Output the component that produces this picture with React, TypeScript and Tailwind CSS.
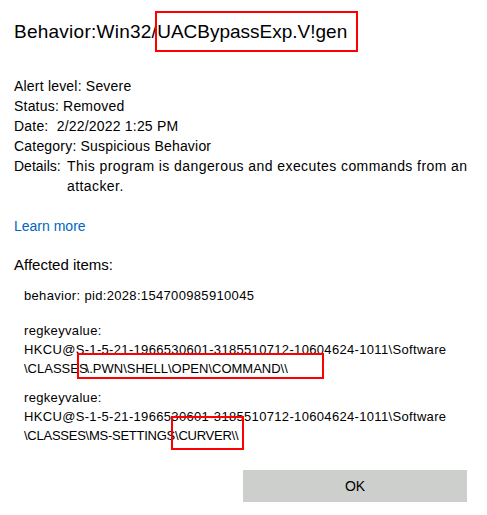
import React from "react";

const font = { fontFamily: '"Liberation Sans", Arial, sans-serif' };

const Box = ({ children, className }: { children: React.ReactNode; className: string }) => (
  <span className={"border-2 border-[#ff0000] " + className}>{children}</span>
);

export default function App() {
  return (
    <div
      className="w-[487px] h-[515px] bg-white text-[#000] overflow-hidden pl-[14px] pr-[16px] pt-[20px] flex flex-col"
      style={font}
    >
      <h1 className="text-[19px] leading-[24px] whitespace-nowrap">
        <span className="tracking-[0.25px]">Behavior:Win32/</span>
        <Box className="-ml-[2px] pl-0 pr-[9px] py-[8px]">UACBypassExp.V!gen</Box>
      </h1>

      <div className="mt-[32px] text-[14px] leading-[20px] tracking-[0.2px]">
        <div>Alert level: Severe</div>
        <div>Status: Removed</div>
        <div>Date:&nbsp; 2/22/2022 1:25 PM</div>
        <div>Category: Suspicious Behavior</div>
        <div className="flex">
          <span className="shrink-0 w-[53px] tracking-normal">Details:</span>
          <span className="tracking-[0.42px]">
            This program is dangerous and executes commands from an attacker.
          </span>
        </div>
      </div>

      <a className="mt-[20px] text-[14px] leading-[20px] text-[#0067c0]">Learn more</a>

      <div className="mt-[19px] text-[15px] leading-[20px]">Affected items:</div>

      <div className="pl-[10px] text-[13px] leading-[19px] tracking-[0.33px]">
        <div className="mt-[11px]">behavior: pid:2028:154700985910045</div>

        <div className="mt-[16px]">
          <div>regkeyvalue:</div>
          <div className="whitespace-nowrap">HKCU@S-1-5-21-1966530601-3185510712-10604624-1011\Software</div>
          <div className="whitespace-nowrap tracking-normal">
            \CLASSES
            <Box className="-ml-[11px] pl-[7px] pr-[34px] pt-[6px] pb-[1px]">
              {"\\.PWN\\SHELL\\OPEN\\COMMAND\\\\"}
            </Box>
          </div>
        </div>

        <div className="mt-[10px]">
          <div>regkeyvalue:</div>
          <div className="whitespace-nowrap">HKCU@S-1-5-21-1966530601-3185510712-10604624-1011\Software</div>
          <div className="whitespace-nowrap tracking-[-0.25px]">
            \CLASSES\MS-SETTINGS
            <Box className="-ml-[4px] pl-[2px] pr-[4px] pt-[10px] pb-[5px]">{"\\CURVER\\\\"}</Box>
          </div>
        </div>
      </div>

      <div className="mt-auto mb-[13px] flex justify-end pr-[4px]">
        <button className="w-[224px] h-[32px] bg-[#cccfcb] text-[14px] text-[#000]">OK</button>
      </div>
    </div>
  );
}
